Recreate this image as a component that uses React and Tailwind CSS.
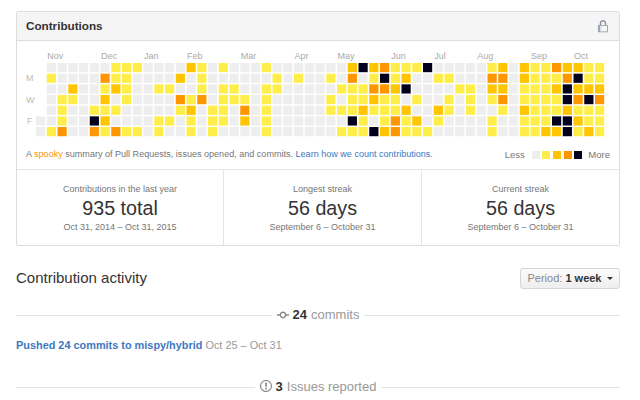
const LEVELS = ['#eeeeee', '#ffee4a', '#ffc501', '#fe9600', '#03001c'];

// contribution level per weekday row -> { week column: level }, anything missing is level 0
const cells = {
  0: { 7: 1, 8: 1, 9: 1, 14: 2, 15: 1, 17: 1, 21: 1, 29: 2, 30: 4, 31: 2, 32: 3, 33: 1, 34: 1, 35: 1, 36: 4, 42: 1, 43: 2, 45: 2, 46: 1, 47: 1, 48: 3, 49: 2, 50: 2, 51: 1, 52: 1 },
  1: { 1: 1, 6: 3, 7: 1, 8: 1, 13: 2, 15: 1, 22: 1, 24: 1, 27: 1, 29: 3, 31: 1, 32: 4, 33: 1, 34: 2, 37: 1, 38: 1, 42: 3, 43: 3, 45: 2, 46: 1, 47: 1, 48: 1, 49: 3, 50: 4, 51: 1, 52: 1 },
  2: { 3: 2, 6: 1, 7: 2, 8: 1, 11: 1, 12: 1, 15: 1, 17: 1, 18: 1, 21: 1, 22: 1, 28: 1, 29: 1, 30: 1, 31: 3, 32: 3, 33: 2, 34: 4, 39: 1, 40: 1, 42: 2, 43: 2, 45: 1, 46: 1, 47: 1, 48: 2, 49: 4, 50: 2, 51: 2, 52: 2 },
  3: { 2: 1, 3: 1, 6: 2, 8: 1, 13: 3, 14: 1, 15: 3, 17: 1, 18: 1, 19: 1, 21: 1, 27: 1, 29: 1, 30: 1, 31: 2, 32: 1, 33: 1, 35: 1, 38: 1, 40: 1, 42: 1, 43: 3, 45: 1, 46: 1, 47: 1, 48: 1, 49: 4, 50: 3, 51: 4, 52: 3 },
  4: { 2: 1, 5: 1, 6: 1, 7: 1, 13: 1, 14: 2, 16: 1, 17: 1, 19: 3, 21: 1, 27: 1, 28: 1, 29: 1, 30: 2, 31: 1, 32: 1, 33: 1, 34: 2, 37: 2, 38: 1, 40: 1, 43: 1, 45: 2, 46: 1, 47: 1, 48: 1, 49: 2, 50: 1, 51: 1, 52: 1 },
  5: { 2: 1, 5: 4, 6: 2, 11: 1, 12: 1, 14: 1, 16: 1, 17: 1, 19: 2, 21: 1, 29: 4, 30: 1, 32: 1, 33: 3, 34: 1, 35: 2, 37: 1, 42: 1, 45: 1, 46: 1, 47: 1, 48: 4, 49: 4, 50: 2, 51: 1, 52: 1 },
  6: { 1: 1, 2: 3, 5: 3, 6: 1, 7: 3, 8: 1, 9: 1, 11: 1, 14: 1, 16: 1, 21: 1, 28: 1, 29: 1, 30: 1, 31: 4, 32: 2, 33: 3, 34: 1, 35: 1, 36: 1, 42: 1, 45: 1, 46: 1, 47: 2, 48: 2, 49: 4, 50: 1, 51: 2, 52: 1 },
};

const MONTHS = [
  ['Nov', 1], ['Dec', 6], ['Jan', 10], ['Feb', 14], ['Mar', 19], ['Apr', 24], ['May', 28], ['Jun', 33], ['Jul', 37], ['Aug', 41], ['Sep', 46], ['Oct', 50],
];

const PITCH_X = 10.75;
const PITCH_Y = 10.67;
const CELL = 9.2;

function Calendar() {
  const rects = [];
  for (let row = 0; row < 7; row++) {
    for (let col = 0; col < 53; col++) {
      if (col === 0 && row < 5) continue;
      const level = cells[row][col] || 0;
      rects.push(
        <rect key={row + '-' + col} x={19 + col * PITCH_X} y={14 + row * PITCH_Y} width={CELL} height={CELL} fill={LEVELS[level]} />
      );
    }
  }
  return (
    <svg width="602" height="92" className="block">
      {MONTHS.map(([name, col]) => (
        <text key={name} x={19 + col * PITCH_X + 0.5} y={10} fontSize="9" fill="#aaaaaa">{name}</text>
      ))}
      <text x="9" y="32" fontSize="9" fill="#bbbbbb">M</text>
      <text x="9" y="53.5" fontSize="9" fill="#bbbbbb">W</text>
      <text x="10" y="75" fontSize="9" fill="#bbbbbb">F</text>
      {rects}
    </svg>
  );
}

function Stat({ label, value, range, className }) {
  return (
    <div className={'flex flex-col items-center pt-[13px] ' + className}>
      <div className="text-[9px] leading-[13px] text-[#767676]">{label}</div>
      <div className="text-[19.7px] leading-[25px] text-[#333333]">{value}</div>
      <div className="text-[9px] leading-[13px] text-[#767676]">{range}</div>
    </div>
  );
}

function SectionRule({ icon, count, label, className }) {
  return (
    <div className={'flex items-center ' + className}>
      <div className="h-px flex-1 bg-[#e5e5e5]" />
      <div className="flex -translate-y-px items-center gap-[4px] px-[5px] text-[13px] text-[#999999]">
        {icon}
        <span className="font-bold text-[#333333]">{count}</span>
        <span>{label}</span>
      </div>
      <div className="h-px flex-1 bg-[#e5e5e5]" />
    </div>
  );
}

export default function App() {
  return (
    <div className="h-[400px] w-[640px] overflow-hidden bg-white pl-4 pr-5 pt-[11px] font-['Liberation_Sans',Arial,sans-serif]">
      <div className="rounded-[2px] border border-[#dddddd]">
        <div className="flex h-[29px] items-center justify-between border-b border-[#dddddd] bg-[#f5f5f5] pl-[9px] pr-[11px]">
          <h3 className="text-[11.7px] font-bold text-[#333333]">Contributions</h3>
          <svg width="10" height="13" viewBox="0 0 12 16" fill="#8a94a0">
            <path d="M4 13H3v-1h1v1zm8-6v7c0 .55-.45 1-1 1H1c-.55 0-1-.45-1-1V7c0-.55.45-1 1-1h1V4c0-2.2 1.8-4 4-4s4 1.8 4 4v2h1c.55 0 1 .45 1 1zM3.8 6h4.41V4c0-1.22-.98-2.2-2.2-2.2-1.22 0-2.2.98-2.2 2.2v2H3.8zM11 7H2v7h9V7zM4 8H3v1h1V8zm0 2H3v1h1v-1z" />
          </svg>
        </div>
        <div className="pt-[8px]">
          <Calendar />
        </div>
        <div className="flex h-[28px] items-center justify-between px-[9px] text-[9.05px] text-[#767676]">
          <div>
            A <span className="text-[#fe9600]">spooky</span> summary of Pull Requests, issues opened, and commits.{' '}
            <span className="text-[#4078c0]">Learn how we count contributions</span>.
          </div>
          <div className="flex items-center text-[9.5px]">
            <span className="mr-[7px]">Less</span>
            <div className="flex gap-[2.67px]">
              {LEVELS.map((c) => (
                <span key={c} className="h-[8px] w-[8px]" style={{ backgroundColor: c }} />
              ))}
            </div>
            <span className="ml-[6px]">More</span>
          </div>
        </div>
        <div className="grid h-[76px] grid-cols-[207px_198px_1fr] border-t border-[#e5e5e5]">
          <Stat label="Contributions in the last year" value="935 total" range="Oct 31, 2014 – Oct 31, 2015" className="border-r border-[#e5e5e5]" />
          <Stat label="Longest streak" value="56 days" range="September 6 – October 31" className="border-r border-[#e5e5e5]" />
          <Stat label="Current streak" value="56 days" range="September 6 – October 31" className="" />
        </div>
      </div>

      <div className="mt-[22px] flex h-[21px] items-center justify-between">
        <h2 className="text-[15px] text-[#333333]">Contribution activity</h2>
        <div className="flex h-[21px] w-[100px] items-center justify-center rounded-[3px] border border-[#d5d5d5] bg-gradient-to-b from-[#fcfcfc] to-[#eeeeee] text-[11px] text-[#888888]">
          Period:&nbsp;<span className="font-bold text-[#333333]">1 week</span>
          <span className="ml-[5px] h-0 w-0 border-x-[3px] border-t-[3px] border-x-transparent border-t-[#333333]" />
        </div>
      </div>

      <SectionRule
        className="mt-[17px]"
        count="24"
        label="commits"
        icon={
          <svg width="12" height="14" viewBox="0 0 14 16" fill="#888888">
            <path d="M10.86 7c-.45-1.72-2-3-3.86-3-1.86 0-3.41 1.28-3.86 3H0v2h3.14c.45 1.72 2 3 3.86 3 1.86 0 3.41-1.28 3.86-3H14V7h-3.14zM7 10.2c-1.22 0-2.2-.98-2.2-2.2 0-1.22.98-2.2 2.2-2.2 1.22 0 2.2.98 2.2 2.2 0 1.22-.98 2.2-2.2 2.2z" />
          </svg>
        }
      />

      <div className="mt-[12px] text-[10.9px] leading-[14px]">
        <span className="font-bold text-[#4078c0]">Pushed 24 commits to mispy/hybrid</span>{' '}
        <span className="text-[#999999]">Oct 25 – Oct 31</span>
      </div>

      <SectionRule
        className="mt-[26px]"
        count="3"
        label="Issues reported"
        icon={
          <svg width="12" height="14" viewBox="0 0 14 16" fill="#888888">
            <path d="M7 2.3c3.14 0 5.7 2.56 5.7 5.7s-2.56 5.7-5.7 5.7A5.71 5.71 0 0 1 1.3 8c0-3.14 2.56-5.7 5.7-5.7zM7 1C3.14 1 0 4.14 0 8s3.14 7 7 7 7-3.14 7-7-3.14-7-7-7zm1 3H6v5h2V4zm0 6H6v2h2v-2z" />
          </svg>
        }
      />
    </div>
  );
}
